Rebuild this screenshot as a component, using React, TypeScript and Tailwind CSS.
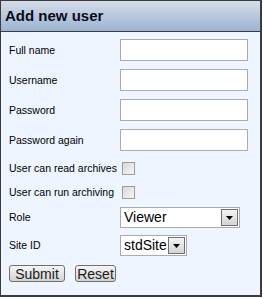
import React from 'react';

const labelCls = 'w-[111px] shrink-0 whitespace-nowrap text-[10.5px] leading-none text-black';

function TextRow({ label, type = 'text' }: { label: string; type?: string }) {
  return (
    <div className="flex items-center h-[22px]">
      <span className={labelCls}>{label}</span>
      <input type={type} className="w-[128px] h-[22px] border border-[#a5acb2] bg-white outline-none" />
    </div>
  );
}

function CheckRow({ label }: { label: string }) {
  return (
    <div className="flex items-center h-[22px]">
      <span className={labelCls}>{label}</span>
      <span className="ml-[2px] w-[13px] h-[13px] border border-[#9c9c9c] bg-gradient-to-br from-[#d8d8d8] to-[#f6f6f6]" />
    </div>
  );
}

function Select({ value, width }: { value: string; width: string }) {
  return (
    <div className={`${width} h-[21px] flex border border-[#a5acb2] bg-white`}>
      <span className="flex-1 pl-[3px] text-[14px] leading-[19px] text-black whitespace-nowrap overflow-hidden">{value}</span>
      <span className="w-[17px] h-[17px] m-[1px] shrink-0 flex items-center justify-center border border-[#707070] bg-gradient-to-b from-[#f4f4f4] to-[#d4d4d4]">
        <svg width="7" height="4" viewBox="0 0 7 4">
          <path d="M0 0h7L3.5 4z" fill="#000" />
        </svg>
      </span>
    </div>
  );
}

export default function App() {
  return (
    <div className="w-[263px] h-[298px] bg-white font-['Liberation_Sans',Arial,sans-serif]">
      <div className="w-[262px] h-[297px] flex flex-col border border-r-2 border-b-2 border-[#3c3c3c]">
        <div className="h-[31px] shrink-0 flex items-center pl-[4px] border-b border-[#3c3c3c] bg-gradient-to-b from-[#d5dde9] to-[#9cb3d1]">
          <span className="text-[15px] font-bold text-[#0a0a1a]">Add new user</span>
        </div>
        <div className="flex-1 bg-[#eef5ff] pl-[8px] pt-[7px] flex flex-col">
          <TextRow label="Full name" />
          <div className="mt-[8px]"><TextRow label="Username" /></div>
          <div className="mt-[8px]"><TextRow label="Password" type="password" /></div>
          <div className="mt-[8px]"><TextRow label="Password again" type="password" /></div>
          <div className="mt-[6px]"><CheckRow label="User can read archives" /></div>
          <div className="mt-[2px]"><CheckRow label="User can run archiving" /></div>
          <div className="mt-[4px] flex items-center h-[21px]">
            <span className={labelCls}>Role</span>
            <Select value="Viewer" width="w-[120px]" />
          </div>
          <div className="mt-[7px] flex items-center h-[21px]">
            <span className={labelCls}>Site ID</span>
            <Select value="stdSite" width="w-[67px]" />
          </div>
          <div className="mt-[9px] flex gap-[10px]">
            <button className="w-[56px] h-[17px] rounded-[3px] border border-[#707070] bg-gradient-to-b from-[#f6f6f6] to-[#d2d2d2] text-[14px] leading-none text-[#1a1a1a]">
              Submit
            </button>
            <button className="w-[41px] h-[17px] rounded-[3px] border border-[#707070] bg-gradient-to-b from-[#f6f6f6] to-[#d2d2d2] text-[14px] leading-none text-[#1a1a1a]">
              Reset
            </button>
          </div>
        </div>
      </div>
    </div>
  );
}
